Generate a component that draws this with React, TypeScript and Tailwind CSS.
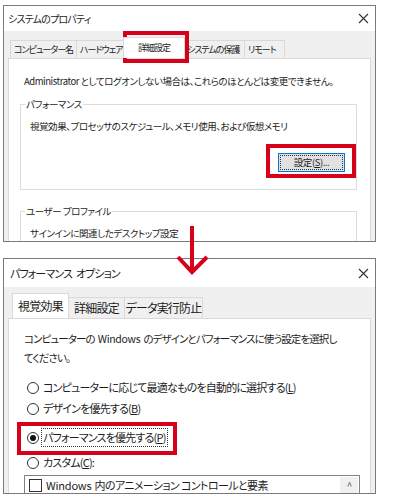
import React from 'react';

const font = "[font-family:'Noto_Sans_CJK_JP','Noto_Sans',sans-serif] [font-feature-settings:'palt']";

function CloseX() {
  return (
    <svg width="11" height="11" viewBox="0 0 11 11" className="shrink-0">
      <path d="M1 1 L10 10 M10 1 L1 10" stroke="#333" strokeWidth="1.1" fill="none" />
    </svg>
  );
}

function Radio({ checked }: { checked?: boolean }) {
  return (
    <span className="w-[12px] h-[12px] rounded-full border border-[#333] bg-white flex items-center justify-center shrink-0">
      {checked && <span className="w-[6px] h-[6px] rounded-full bg-[#111]" />}
    </span>
  );
}

function SystemProperties() {
  const tabs = [
    { t: 'コンピューター名', w: 'w-[67px]' },
    { t: 'ハードウェア', w: 'w-[48px]' },
    { t: '詳細設定', w: 'w-[62px]' },
    { t: 'システムの保護', w: 'w-[62px]' },
    { t: 'リモート', w: 'w-[41px]' },
  ];
  return (
    <div className="ml-[3px] mt-[5px] w-[373px] h-[237px] border border-[#7a7a7a] flex flex-col overflow-hidden text-[9.5px] tracking-[-0.45px] text-[#1c1c1c]">
      <div className="h-[25px] shrink-0 bg-white flex items-center justify-between pl-[4px] pr-[6px]">
        <span className="text-[10px] tracking-[-0.8px]">システムのプロパティ</span>
        <CloseX />
      </div>
      <div className="flex-1 bg-[#f0f0f0] pt-[6px] flex flex-col">
        <div className="h-[21px] shrink-0 flex items-end pl-[6px] text-[9px] tracking-[-1px]">
          {tabs.map((tab, i) =>
            i === 2 ? (
              <div key={tab.t} className={`${tab.w} h-[21px] bg-white border border-b-0 border-[#d9d9d9] -mx-[1px] flex items-center justify-center whitespace-nowrap relative z-10`}>{tab.t}</div>
            ) : (
              <div key={tab.t} className={`${tab.w} h-[18px] border border-b-0 border-[#d9d9d9] -ml-px first:ml-0 pl-[3px] flex items-center whitespace-nowrap overflow-hidden`}>{tab.t}</div>
            )
          )}
        </div>
        <div className="flex-1 mx-[4px] bg-white border border-[#d9d9d9] border-b-0 pl-[15px] pr-[6px] pt-[14px]">
          <p className="leading-[16px] whitespace-nowrap">Administrator としてログオンしない場合は、これらのほとんどは変更できません。</p>
          <fieldset className="mt-[8px] -ml-[4px] w-[337px] border border-[#dcdcdc] pl-[4px] pr-[11px] pb-[17px]">
            <legend className="px-[1px] leading-[15px]">パフォーマンス</legend>
            <p className="mt-[7px] pl-[5px] leading-[15px]">視覚効果、プロセッサのスケジュール、メモリ使用、および仮想メモリ</p>
            <div className="mt-[19px] flex justify-end">
              <div className="w-[67px] h-[19px] bg-[#e1e1e1] border border-[#0078d7] p-[1px]">
                <div className="w-full h-full border border-dotted border-[#333] flex items-center justify-center">
                  設定(<u>S</u>)...
                </div>
              </div>
            </div>
          </fieldset>
          <fieldset className="mt-[14px] -ml-[4px] w-[337px] h-[60px] border border-[#dcdcdc] pl-[4px]">
            <legend className="px-[1px] leading-[15px]">ユーザー プロファイル</legend>
            <p className="mt-[7px] pl-[5px] leading-[15px]">サインインに関連したデスクトップ設定</p>
          </fieldset>
        </div>
      </div>
    </div>
  );
}

function PerformanceOptions() {
  const tabs = [
    { t: '視覚効果', w: 'w-[57px]' },
    { t: '詳細設定', w: 'w-[57px]' },
    { t: 'データ実行防止', w: 'w-[79px]' },
  ];
  return (
    <div className="ml-[3px] mt-[16px] w-[373px] h-[236px] border border-[#7a7a7a] flex flex-col overflow-hidden text-[11px] tracking-[-0.8px] text-[#1c1c1c]">
      <div className="h-[28px] bg-white flex items-center justify-between pl-[6px] pr-[6px] shrink-0">
        <span className="tracking-[-0.9px]">パフォーマンス<span className="ml-[4px]">オプション</span></span>
        <CloseX />
      </div>
      <div className="flex-1 bg-[#f0f0f0] pt-[6px] flex flex-col">
        <div className="h-[25px] flex items-end pl-[8px] shrink-0 text-[12px] tracking-[-0.8px]">
          {tabs.map((tab, i) =>
            i === 0 ? (
              <div key={tab.t} className={`${tab.w} h-[25px] bg-white border border-b-0 border-[#d9d9d9] flex items-center justify-center whitespace-nowrap relative z-10`}>{tab.t}</div>
            ) : (
              <div key={tab.t} className={`${tab.w} h-[21px] border border-b-0 border-[#d9d9d9] -ml-px flex items-center justify-center whitespace-nowrap`}>{tab.t}</div>
            )
          )}
        </div>
        <div className="flex-1 mx-[4px] bg-white border border-[#d9d9d9] border-b-0 pl-[15px] pt-[10px]">
          <p className="leading-[19px] whitespace-nowrap text-[10.5px] tracking-[-0.9px]">
            コンピューターの<span className="mx-[3px] tracking-[-0.3px]">Windows</span>のデザインとパフォーマンスに使う設定を選択し<br />てください。
          </p>
          <div className="mt-[10px] h-[21px] flex items-center gap-[4px] pl-[3px]">
            <Radio />
            <span>コンピューターに応じて最適なものを自動的に選択する(<u>L</u>)</span>
          </div>
          <div className="h-[21px] flex items-center gap-[4px] pl-[3px]">
            <Radio />
            <span>デザインを優先する(<u>B</u>)</span>
          </div>
          <div className="mt-[8px] h-[21px] flex items-center gap-[2px] pl-[3px]">
            <Radio checked />
            <span className="border border-dotted border-[#333] px-[1px] leading-[17px]">パフォーマンスを優先する(<u>P</u>)</span>
          </div>
          <div className="mt-[4px] h-[21px] flex items-center gap-[4px] pl-[3px]">
            <Radio />
            <span>カスタム(<u>C</u>):</span>
          </div>
          <div className="mt-[2px] w-[336px] h-[40px] border border-[#828282] flex">
            <div className="flex-1 flex items-start pt-[2px] pl-[4px] gap-[4px]">
              <span className="mt-[1px] w-[13px] h-[13px] border border-[#333] bg-white shrink-0" />
              <span className="leading-[15px] tracking-[-0.6px]">
                <span className="mr-[3px] tracking-[-0.2px]">Windows</span>内のアニメーション コントロールと要素
              </span>
            </div>
            <div className="w-[18px] h-[17px] mt-[1px] mr-[1px] flex justify-center items-center text-[10px] text-[#555] bg-[#f0f0f0]">^</div>
          </div>
        </div>
      </div>
    </div>
  );
}

export default function App() {
  return (
    <div className={`relative w-[400px] h-[501px] bg-white overflow-hidden ${font}`}>
      <SystemProperties />
      <PerformanceOptions />

      {/* red highlight boxes */}
      <div className="absolute left-[123px] top-[31px] w-[66px] h-[32px] border-[4px] border-[#d7001a] pointer-events-none" />
      <div className="absolute left-[266px] top-[144px] w-[90px] h-[34px] border-[4px] border-[#d7001a] pointer-events-none" />
      <div className="absolute left-[17px] top-[422px] w-[160px] h-[33px] border-[4px] border-[#d7001a] pointer-events-none" />

      {/* arrow */}
      <svg className="absolute left-[170px] top-[222px]" width="44" height="56" viewBox="0 0 44 56">
        <path d="M22 4 L22 50 M8 35 L22 50 L37 35" stroke="#d7001a" strokeWidth="4" fill="none" />
      </svg>
    </div>
  );
}
